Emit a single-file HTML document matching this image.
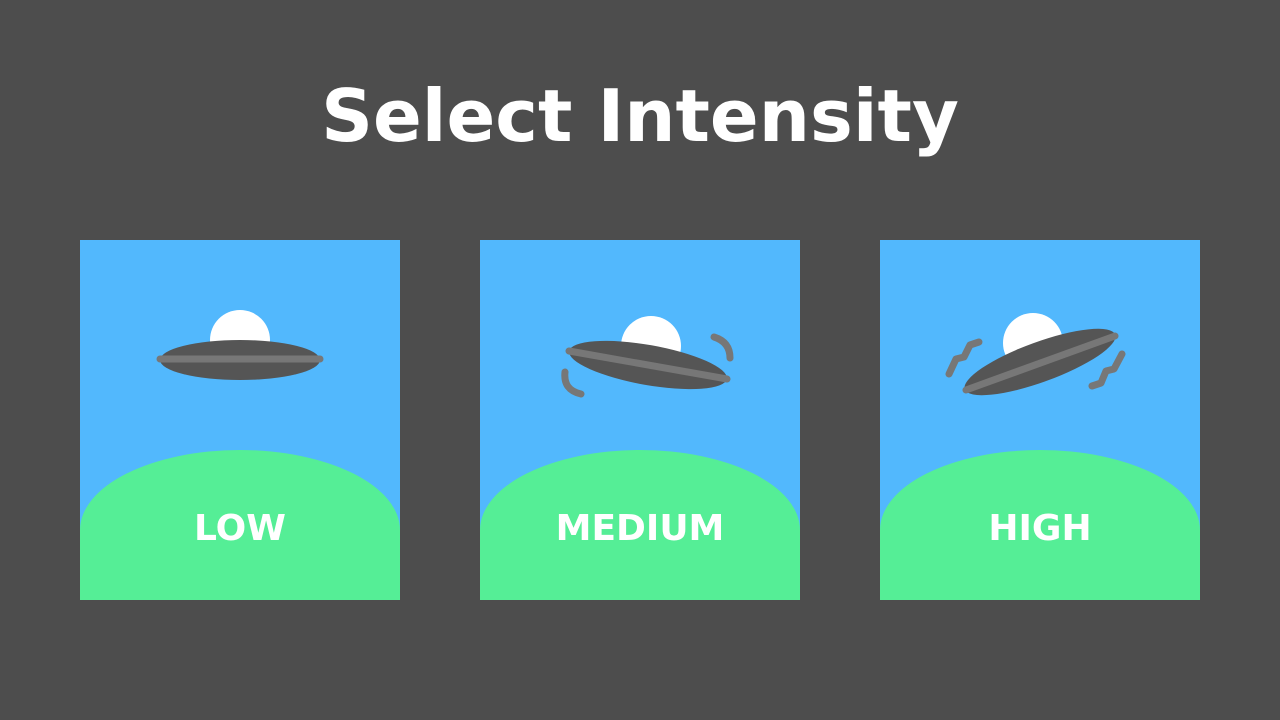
<!DOCTYPE html>
<html><head><style>body{margin:0;background:#4d4d4d}svg{display:block}</style></head><body>
<svg width="1280" height="720" xmlns="http://www.w3.org/2000/svg" font-family="DejaVu Sans, sans-serif" font-weight="bold">
<rect width="1280" height="720" fill="#4d4d4d"/>
<text x="640" y="141" font-size="72" fill="#fff" text-anchor="middle">Select Intensity</text>
<defs><clipPath id="c1"><rect x="80" y="240" width="320" height="360"/></clipPath>
<clipPath id="c2"><rect x="480" y="240" width="320" height="360"/></clipPath>
<clipPath id="c3"><rect x="880" y="240" width="320" height="360"/></clipPath></defs>
<g clip-path="url(#c1)"><rect x="80" y="240" width="320" height="360" fill="#52b8fd"/>
<ellipse cx="240" cy="530" rx="160" ry="80" fill="#55ee96"/><rect x="80" y="530" width="320" height="70" fill="#55ee96"/></g>
<g clip-path="url(#c2)"><rect x="480" y="240" width="320" height="360" fill="#52b8fd"/>
<ellipse cx="640" cy="530" rx="160" ry="80" fill="#55ee96"/><rect x="480" y="530" width="320" height="70" fill="#55ee96"/></g>
<g clip-path="url(#c3)"><rect x="880" y="240" width="320" height="360" fill="#52b8fd"/>
<ellipse cx="1040" cy="530" rx="160" ry="80" fill="#55ee96"/><rect x="880" y="530" width="320" height="70" fill="#55ee96"/></g>
<g font-size="36" fill="#fff" text-anchor="middle">
<text x="240" y="540">LOW</text><text x="640" y="540">MEDIUM</text><text x="1040" y="540">HIGH</text></g>
<!-- low -->
<circle cx="240" cy="340" r="30" fill="#fff"/>
<ellipse cx="240" cy="360" rx="80" ry="20" fill="#555"/>
<line x1="160" y1="359" x2="320" y2="359" stroke="#777" stroke-width="7" stroke-linecap="round"/>
<!-- medium -->
<circle cx="651" cy="346" r="30" fill="#fff"/>
<g transform="rotate(10 648 365)"><ellipse cx="648" cy="365" rx="80" ry="20" fill="#555"/></g>
<line x1="569" y1="351" x2="727" y2="379" stroke="#777" stroke-width="7" stroke-linecap="round"/>
<path d="M714 337 Q730 342 730 358" fill="none" stroke="#777" stroke-width="7" stroke-linecap="round"/>
<path d="M565 372 Q563 390 581 394" fill="none" stroke="#777" stroke-width="7" stroke-linecap="round"/>
<!-- high -->
<circle cx="1033" cy="343" r="30" fill="#fff"/>
<g transform="rotate(-20 1040 362)"><ellipse cx="1040" cy="362" rx="80" ry="20" fill="#555"/></g>
<line x1="966" y1="390" x2="1115" y2="336" stroke="#777" stroke-width="7" stroke-linecap="round"/>
<path d="M949 374 L956 359 L964 357 L970 345 L979 342" fill="none" stroke="#777" stroke-width="7" stroke-linecap="round" stroke-linejoin="round"/>
<path d="M1092 386 L1101 383 L1106 371 L1114 369 L1122 354" fill="none" stroke="#777" stroke-width="7" stroke-linecap="round" stroke-linejoin="round"/>
</svg>
</body></html>
